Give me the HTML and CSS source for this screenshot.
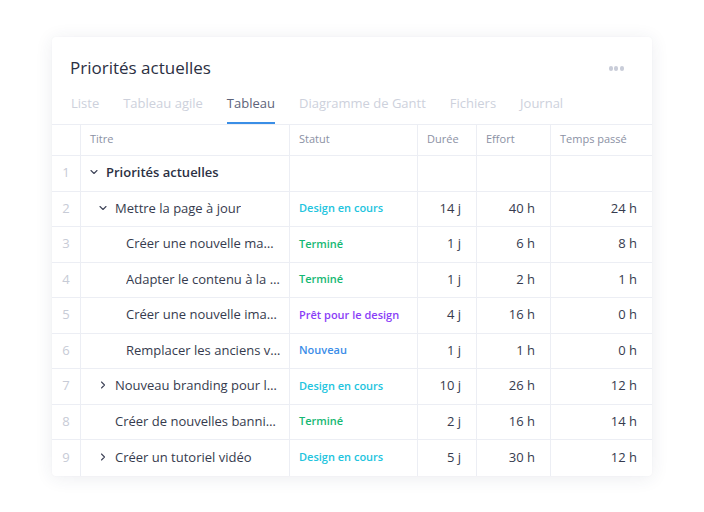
FILE: index.html
```html
<!DOCTYPE html>
<html lang="fr">
<head>
<meta charset="utf-8">
<link rel="stylesheet" href="styles.css">
</head>
<body>
<div class="page">
  <div class="card">
    <div class="head">
      <div class="title">Priorités actuelles</div>
      <div class="more"><span></span><span></span><span></span></div>
    </div>
    <div class="tabs">
      <div class="tab">Liste</div>
      <div class="tab">Tableau agile</div>
      <div class="tab active">Tableau</div>
      <div class="tab">Diagramme de Gantt</div>
      <div class="tab">Fichiers</div>
      <div class="tab">Journal</div>
    </div>
    <div class="grid">
      <div class="row hdr">
        <div class="c num"></div>
        <div class="c name">Titre</div>
        <div class="c">Statut</div>
        <div class="c">Durée</div>
        <div class="c">Effort</div>
        <div class="c">Temps passé</div>
      </div>
      <div class="row">
        <div class="c num">1</div>
        <div class="c name l0 strong"><span class="chev"><svg viewBox="0 0 8 8" width="8" height="8"><path d="M1 2.5 L4 5.5 L7 2.5"/></svg></span><span class="txt">Priorités actuelles</span></div>
        <div class="c"></div>
        <div class="c"></div>
        <div class="c"></div>
        <div class="c"></div>
      </div>
      <div class="row">
        <div class="c num">2</div>
        <div class="c name l1"><span class="chev"><svg viewBox="0 0 8 8" width="8" height="8"><path d="M1 2.5 L4 5.5 L7 2.5"/></svg></span><span class="txt">Mettre la page à jour</span></div>
        <div class="c st cyan">Design en cours</div>
        <div class="c n">14 j</div>
        <div class="c n">40 h</div>
        <div class="c n">24 h</div>
      </div>
      <div class="row">
        <div class="c num">3</div>
        <div class="c name l2"><span class="txt">Créer une nouvelle maquette</span></div>
        <div class="c st green">Terminé</div>
        <div class="c n">1 j</div>
        <div class="c n">6 h</div>
        <div class="c n">8 h</div>
      </div>
      <div class="row">
        <div class="c num">4</div>
        <div class="c name l2"><span class="txt">Adapter le contenu à la maquette</span></div>
        <div class="c st green">Terminé</div>
        <div class="c n">1 j</div>
        <div class="c n">2 h</div>
        <div class="c n">1 h</div>
      </div>
      <div class="row">
        <div class="c num">5</div>
        <div class="c name l2"><span class="txt">Créer une nouvelle image d'en-tête</span></div>
        <div class="c st purple">Prêt pour le design</div>
        <div class="c n">4 j</div>
        <div class="c n">16 h</div>
        <div class="c n">0 h</div>
      </div>
      <div class="row">
        <div class="c num">6</div>
        <div class="c name l2"><span class="txt">Remplacer les anciens visuels</span></div>
        <div class="c st blue">Nouveau</div>
        <div class="c n">1 j</div>
        <div class="c n">1 h</div>
        <div class="c n">0 h</div>
      </div>
      <div class="row">
        <div class="c num">7</div>
        <div class="c name l1"><span class="chev"><svg viewBox="0 0 8 8" width="8" height="8"><path d="M2.5 1 L5.5 4 L2.5 7"/></svg></span><span class="txt">Nouveau branding pour le site</span></div>
        <div class="c st cyan">Design en cours</div>
        <div class="c n">10 j</div>
        <div class="c n">26 h</div>
        <div class="c n">12 h</div>
      </div>
      <div class="row">
        <div class="c num">8</div>
        <div class="c name l1"><span class="chev"></span><span class="txt">Créer de nouvelles bannières</span></div>
        <div class="c st green">Terminé</div>
        <div class="c n">2 j</div>
        <div class="c n">16 h</div>
        <div class="c n">14 h</div>
      </div>
      <div class="row last">
        <div class="c num">9</div>
        <div class="c name l1"><span class="chev"><svg viewBox="0 0 8 8" width="8" height="8"><path d="M2.5 1 L5.5 4 L2.5 7"/></svg></span><span class="txt">Créer un tutoriel vidéo</span></div>
        <div class="c st cyan">Design en cours</div>
        <div class="c n">5 j</div>
        <div class="c n">30 h</div>
        <div class="c n">12 h</div>
      </div>
    </div>
  </div>
</div>
</body>
</html>
```

FILE: styles.css
```css
* { box-sizing: border-box; }
html, body { margin: 0; padding: 0; background: #ffffff; }
body {
  font-family: "Open Sans", "Liberation Sans", sans-serif;
  color: #363b4e;
  width: 704px;
  height: 512px;
  overflow: hidden;
}
.page {
  padding-top: 37px;
  padding-left: 52px;
}
.card {
  width: 600px;
  height: 439px;
  background: #fff;
  border-radius: 4px;
  box-shadow: 0 2px 18px rgba(40, 50, 90, 0.09), 0 0 2px rgba(40, 50, 90, 0.04);
  overflow: hidden;
  padding-top: 19px;
}
.head {
  display: flex;
  align-items: center;
  justify-content: space-between;
  padding-left: 18px;
  padding-right: 28px;
  height: 24px;
}
.title {
  font-size: 17px;
  line-height: 24px;
  color: #2b3043;
}
.more {
  display: flex;
  gap: 1.4px;
  padding-top: 1px;
}
.more span {
  width: 4.2px;
  height: 4.2px;
  border-radius: 50%;
  background: #c9cdd9;
}
.tabs {
  display: flex;
  gap: 24px;
  margin-top: 14px;
  padding-left: 19px;
}
.tab {
  font-size: 13px;
  line-height: 18px;
  color: #cdd1dc;
  padding-bottom: 10px;
  border-bottom: 2px solid transparent;
}
.tab.active {
  color: #5d6379;
  border-bottom-color: #3a8ee6;
}
.grid {
  border-top: 1px solid #eceef4;
}
.row {
  display: grid;
  grid-template-columns: 28px 209px 128px 59px 74px 102px;
  height: 35.5px;
  border-bottom: 1px solid #eceef4;
}
.row.last { border-bottom: none; }
.row.hdr {
  height: 31px;
}
.c {
  display: flex;
  align-items: center;
  border-left: 1px solid #eceef4;
  padding-left: 9px;
  padding-bottom: 2px;
  font-size: 13px;
  min-width: 0;
  white-space: nowrap;
}
.hdr .c {
  font-size: 11px;
  color: #8b91a4;
  padding-bottom: 3px;
}
.c.num {
  border-left: none;
  padding-left: 0;
  justify-content: center;
  color: #c7cbd6;
}
.c.name { padding-right: 8px; }
.name.l0 { padding-left: 9px; }
.name.l1 { padding-left: 18px; }
.name.l2 { padding-left: 45px; }
.chev {
  flex: none;
  width: 16px;
  display: flex;
  align-items: center;
}
.chev svg {
  fill: none;
  stroke: #3f4458;
  stroke-width: 1.1;
  stroke-linecap: round;
  stroke-linejoin: round;
}
.txt {
  overflow: hidden;
  text-overflow: ellipsis;
  white-space: nowrap;
  min-width: 0;
}
.strong .txt {
  font-weight: 600;
  color: #2b3043;
}
.c.n {
  justify-content: flex-end;
  padding-left: 0;
  padding-right: 15px;
}
.c.st {
  font-size: 11px;
  font-weight: 600;
}
.cyan { color: #22c4de; }
.green { color: #16b873; }
.purple { color: #8a3ef7; }
.blue { color: #3b8de8; }
```
